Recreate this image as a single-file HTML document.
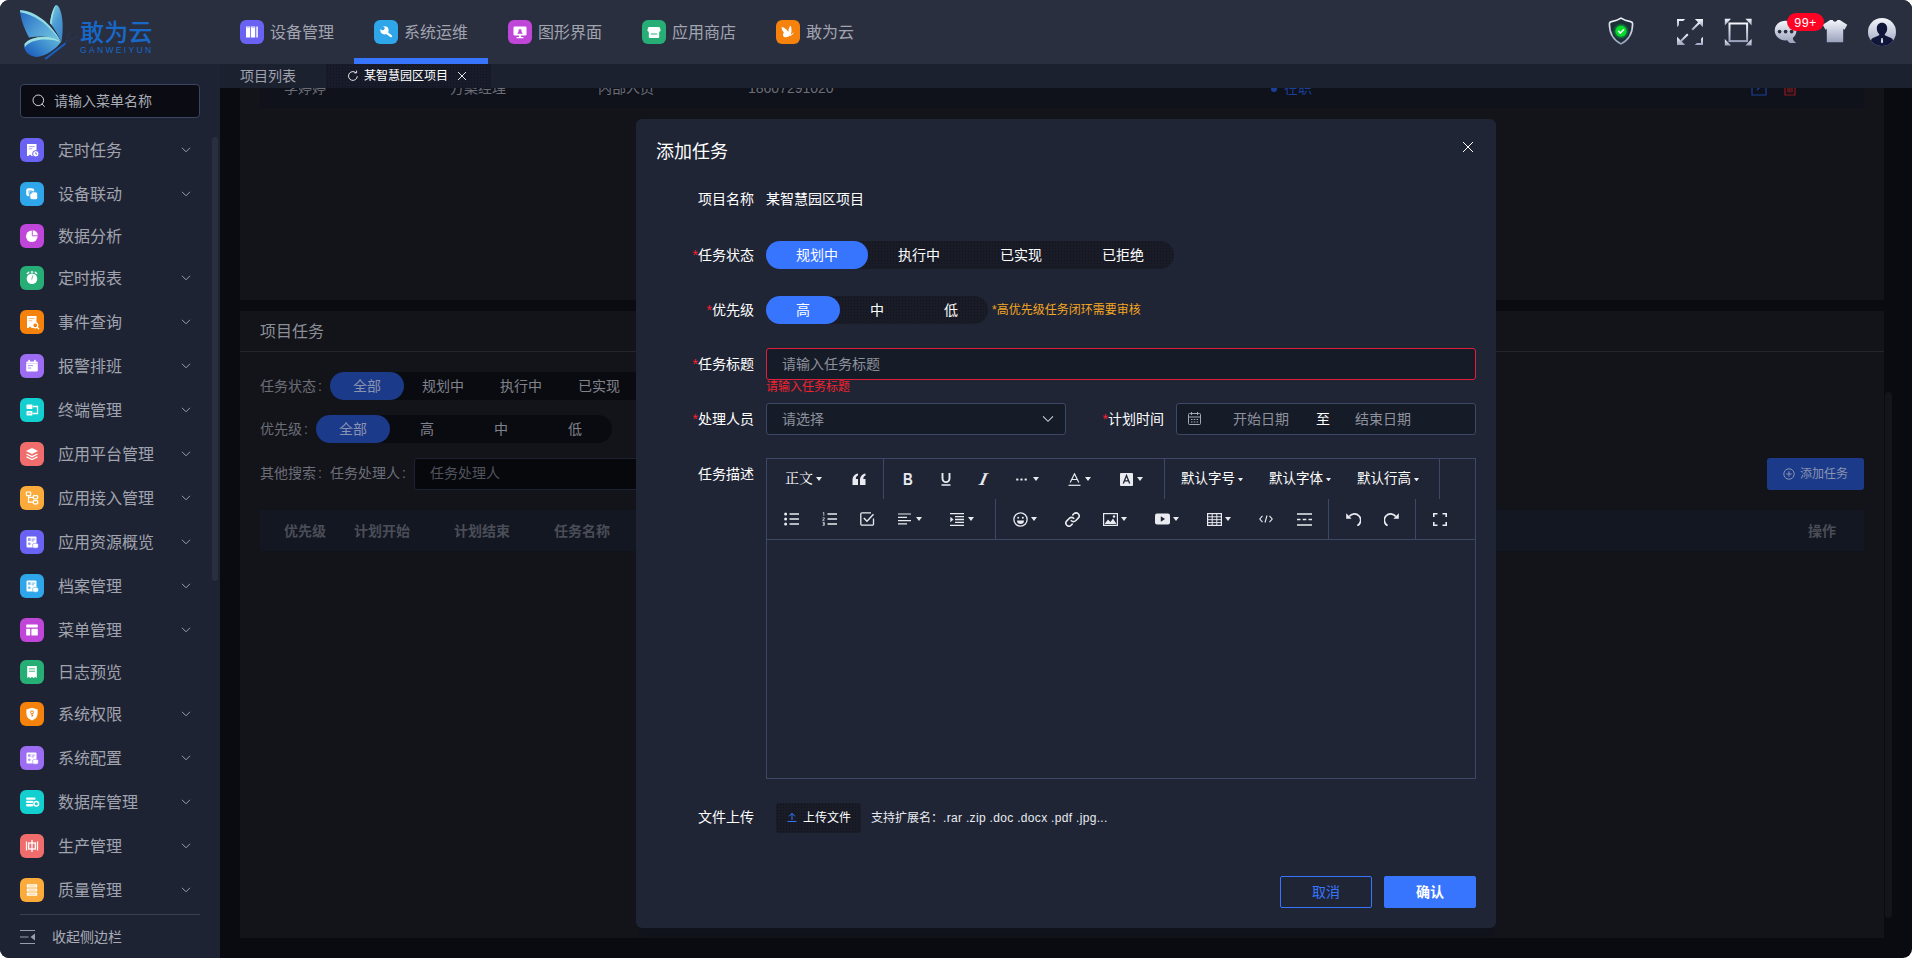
<!DOCTYPE html>
<html lang="zh-CN">
<head>
<meta charset="utf-8">
<title>敢为云 - 添加任务</title>
<style>
*{box-sizing:border-box;margin:0;padding:0}
html,body{width:1912px;height:958px;overflow:hidden;background:#fff}
body{font-family:"Liberation Sans","Noto Sans CJK SC",sans-serif;font-size:14px;color:#fff;position:relative}
.abs{position:absolute}
#app{position:absolute;left:0;top:0;width:1912px;height:958px;border-radius:9px;overflow:hidden;background:#0a0b11}
/* header */
#hdr{position:absolute;left:0;top:0;width:1912px;height:64px;background:#2a2f40}
.nav{position:absolute;top:21px;height:24px;white-space:nowrap}
.nav .ic{position:absolute;left:0;top:-1px;width:24px;height:24px;border-radius:6px}
.nav .ic svg{position:absolute;left:0;top:0}
.nav .tx{position:absolute;left:30px;top:0;line-height:24px;font-size:16px;color:#a1a4ae}
#navline{position:absolute;left:354px;top:58px;width:134px;height:6px;background:#3875ff}
/* sidebar */
#side{position:absolute;left:0;top:64px;width:220px;height:894px;background:#1e2334}
#search{position:absolute;left:20px;top:20px;width:180px;height:34px;border:1px solid #3a4560;border-radius:4px;background:#0b0c13}
#search .ph{position:absolute;left:33px;top:0;line-height:32px;font-size:14px;color:#a9acb6}
.mi{position:absolute;left:0;width:220px;height:24px}
.mi .ic{position:absolute;left:20px;top:0;width:24px;height:24px;border-radius:6px}
.mi .ic svg{position:absolute;left:0;top:0}
.mi .tx{position:absolute;left:58px;top:1px;line-height:24px;font-size:16px;color:#a1a4ae;white-space:nowrap}
.mi .ar{position:absolute;left:181px;top:8px}
/* tab bar */
#tabs{position:absolute;left:220px;top:64px;width:1692px;height:24px;background:#1c2130}
/* main */
.card{position:absolute;background:#13141a}
/* modal */
#modal{position:absolute;left:636px;top:119px;width:860px;height:809px;border-radius:6px;background:#1f2535;box-shadow:0 12px 3px -4px #10131c}
.lbl{position:absolute;left:0;width:118px;text-align:right;font-size:14px;line-height:20px;color:#fff;white-space:nowrap}
.lbl i{color:#ff1f2d;font-style:normal}
.pill{position:absolute;height:28px;border-radius:14px;background:#161923}
.pill span{position:absolute;top:0;height:28px;line-height:28px;text-align:center;font-size:14px;color:#fff}
.pill span.on{background:#3875ff;border-radius:14px}
.inp{position:absolute;height:32px;border:1px solid #3b4866;border-radius:3px;background:#161b28}
.ph{color:#8d919c;font-size:14px}

.dim{font-size:14px;line-height:20px;color:#6b6e77;white-space:nowrap}
.bpill{height:28px;line-height:28px;text-align:center;font-size:14px;color:#80838c;border-radius:14px;white-space:nowrap}
.bpill.on{background:#1c3a8a;color:#8a93b0}
.th{font-size:14px;line-height:18px;color:#4a4d57;font-weight:bold;white-space:nowrap}

.dots,.pill{background-color:#191c27;background-image:radial-gradient(#11131c 0.6px,transparent 0.8px);background-size:3px 3px}
.cl{margin-left:2px}
</style>
</head>
<body>
<div id="app">

<!-- MAIN BACKGROUND (dimmed by modal overlay) -->
<div id="main">
<!-- card 1 : member table bottom row (dimmed) -->
<div class="card" style="left:240px;top:88px;width:1644px;height:212px"></div>
<div class="abs" style="left:260px;top:88px;width:1604px;height:20px;background:#0f121b"></div>
<div class="abs dim" style="left:284px;top:78px">李婷婷</div>
<div class="abs dim" style="left:450px;top:78px">方案经理</div>
<div class="abs dim" style="left:598px;top:78px">内部人员</div>
<div class="abs dim" style="left:748px;top:78px">18607291020</div>
<div class="abs" style="left:1271px;top:86px;width:6px;height:6px;border-radius:3px;background:#1b3f99"></div><div class="abs dim" style="left:1284px;top:78px;color:#1b3f99">在职</div>
<svg class="abs" style="left:1751px;top:80px" width="16" height="16" viewBox="0 0 16 16"><path d="M1 1h8M15 7v8H1V1" stroke="#1b3f99" stroke-width="1.200" fill="none"/><path d="M6 10l8-8" stroke="#1b3f99" stroke-width="1.200"/></svg>
<svg class="abs" style="left:1782px;top:80px" width="16" height="16" viewBox="0 0 16 16"><path d="M1.500 3.500h13M3 3.500v11.500h10V3.500M6 6.500v6M8 6.500v6M10 6.500v6M5.500 3V1h5v2" stroke="#8f1820" stroke-width="1.200" fill="none"/></svg>

<!-- card 2 : project tasks -->
<div class="card" style="left:240px;top:311px;width:1644px;height:627px"></div>
<div class="abs" style="left:260px;top:321px;font-size:16px;line-height:22px;color:#8b8e97;white-space:nowrap">项目任务</div>
<div class="abs" style="left:240px;top:351px;width:1644px;height:1px;background:#23252d"></div>

<div class="abs dim" style="left:260px;top:376px">任务状态<span class="cl">:</span></div>
<div class="abs" style="left:330px;top:372px;width:400px;height:28px;border-radius:14px;background:#0a0b11"></div>
<div class="abs bpill on" style="left:330px;top:372px;width:74px">全部</div>
<div class="abs bpill" style="left:404px;top:372px;width:78px">规划中</div>
<div class="abs bpill" style="left:482px;top:372px;width:78px">执行中</div>
<div class="abs bpill" style="left:560px;top:372px;width:78px">已实现</div>

<div class="abs dim" style="left:260px;top:419px">优先级<span class="cl">:</span></div>
<div class="abs" style="left:316px;top:415px;width:296px;height:28px;border-radius:14px;background:#0a0b11"></div>
<div class="abs bpill on" style="left:316px;top:415px;width:74px">全部</div>
<div class="abs bpill" style="left:390px;top:415px;width:74px">高</div>
<div class="abs bpill" style="left:464px;top:415px;width:74px">中</div>
<div class="abs bpill" style="left:538px;top:415px;width:74px">低</div>

<div class="abs dim" style="left:260px;top:463px">其他搜索<span class="cl">:</span></div><div class="abs dim" style="left:330px;top:463px">任务处理人<span class="cl">:</span></div>
<div class="abs" style="left:414px;top:458px;width:300px;height:32px;border:1px solid #1c2233;border-radius:3px;background:#07080c"></div>
<div class="abs" style="left:430px;top:463px;font-size:14px;line-height:20px;color:#50535c;white-space:nowrap">任务处理人</div>

<div class="abs" style="left:1767px;top:458px;width:97px;height:32px;border-radius:3px;background:#1c3a8a"></div>
<svg class="abs" style="left:1783px;top:468px" width="12" height="12" viewBox="0 0 12 12"><circle cx="6" cy="6" r="5.200" fill="none" stroke="#8a93b0" stroke-width="1"/><path d="M6 3.300v5.400M3.300 6h5.400" stroke="#8a93b0" stroke-width="1"/></svg>
<div class="abs" style="left:1800px;top:464px;font-size:12px;line-height:20px;color:#8a93b0;white-space:nowrap">添加任务</div>

<div class="abs" style="left:260px;top:510px;width:1604px;height:41px;background:#131722"></div>
<div class="abs th" style="left:284px;top:522px">优先级</div>
<div class="abs th" style="left:354px;top:522px">计划开始</div>
<div class="abs th" style="left:454px;top:522px">计划结束</div>
<div class="abs th" style="left:554px;top:522px">任务名称</div>
<div class="abs th" style="left:1808px;top:522px">操作</div>

<!-- page scrollbar -->
<div class="abs" style="left:1885px;top:392px;width:7px;height:526px;border-radius:4px;background:#13151d"></div>
</div>

<!-- HEADER -->
<div id="hdr">
<!-- logo -->
<svg class="abs" style="left:18px;top:3px" width="64" height="60" viewBox="0 0 64 60">
 <defs>
  <linearGradient id="lg1" x1="0" y1="0.2" x2="1" y2="0.8"><stop offset="0" stop-color="#2a70c4"/><stop offset="0.5" stop-color="#4f9fd6"/><stop offset="1" stop-color="#72c4de"/></linearGradient>
  <linearGradient id="lg2" x1="0.2" y1="0" x2="0.8" y2="1"><stop offset="0" stop-color="#78cbdc"/><stop offset="0.5" stop-color="#4a9ad4"/><stop offset="1" stop-color="#3a86cc"/></linearGradient>
  <linearGradient id="lg3" x1="0" y1="0.8" x2="1" y2="0.2"><stop offset="0" stop-color="#1a5cbc"/><stop offset="0.55" stop-color="#3f8fd0"/><stop offset="1" stop-color="#62b4da"/></linearGradient>
 </defs>
 <path d="M2 7.300 C9 7 17 11 24 16 C31 21 38 30 43 38.500 C36 34 24 32 11 34.500 C7 27 2.500 17 2 7.300Z" fill="url(#lg1)"/>
 <path d="M2 7.300 C9 7 17 11 24 16 C31 21 38 30 43 38.500 C37 30.500 29 22 22 17.500 C15 13 8 10 2.100 9.300Z" fill="#92dbe0"/>
 <path d="M38 2 C41 2 44 9 44.600 20 C44.900 28 44.200 34 43.500 39 C40 32 36 25 32 20 C33 12 35 5 38 2Z" fill="url(#lg2)"/>
 <path d="M38 2 C36.500 6 34.500 13 33.600 21.800 L32 20 C33 12 35 5 38 2Z" fill="#9fe3e0"/>
 <path d="M6.500 41 C10 36 20 33 30 34 C36 34.500 41 37 43 39 C38 46 28 53 19 54 C11 53.500 5 48 6.500 41Z" fill="url(#lg3)"/>
 <path d="M6.500 41 C10 36 20 33 30 34 C36 34.500 41 37 43 39 C36 36.800 28 36 21 37 C14 38 9 40.500 6.800 44.500Z" fill="#9be0e0"/>
 <path d="M26.500 55.300 L46.800 39.800 L48 41.300 L27.800 56.800Z" fill="#1a5fc2"/>
 <path d="M47.500 40 L52 28 M47.500 40 L60 33" stroke="#1c4f9c" stroke-width="0.500" fill="none" stroke-dasharray="1.200 1"/>
</svg>
<div class="abs" style="left:80px;top:18px;font-size:24px;line-height:30px;color:#1868c8;font-weight:500;letter-spacing:0.2px;white-space:nowrap">敢为云</div>
<div class="abs" style="left:80px;top:45px;font-size:8.500px;line-height:10px;color:#1868c8;letter-spacing:2.350px;white-space:nowrap;transform-origin:0 0">GANWEIYUN</div>

<!-- nav -->
<div class="nav" style="left:240px"><div class="ic" style="background:#6a62f2"><svg width="24" height="24" viewBox="0 0 24 24"><rect x="6" y="6.500" width="4.200" height="11" fill="#fff"/><rect x="11" y="6.500" width="4.200" height="11" fill="#fff"/><rect x="16.300" y="6.500" width="1.500" height="11" fill="#fff"/><rect x="6.800" y="7.200" width="2.600" height="0.800" fill="#6a62f2" opacity=".5"/><rect x="11.800" y="7.200" width="2.600" height="0.800" fill="#6a62f2" opacity=".5"/></svg></div><div class="tx">设备管理</div></div>
<div class="nav" style="left:374px"><div class="ic" style="background:#2ea6e9"><svg width="24" height="24" viewBox="0 0 24 24"><circle cx="10.500" cy="10.300" r="4.100" fill="#fff"/><circle cx="8.600" cy="8.300" r="2" fill="#2ea6e9"/><path d="M8.600 8.300L4.500 8.500 8 4.500z" fill="#2ea6e9"/><path d="M13.200 13.300L17 16.100" stroke="#fff" stroke-width="2.400" stroke-linecap="round"/></svg></div><div class="tx">系统运维</div></div>
<div class="nav" style="left:508px"><div class="ic" style="background:#c046d9"><svg width="24" height="24" viewBox="0 0 24 24"><rect x="5.500" y="6.500" width="13" height="9" rx="1.200" fill="#fff"/><rect x="11" y="15" width="2" height="2.500" fill="#fff"/><rect x="8.500" y="17" width="7" height="1.300" rx=".6" fill="#fff"/><path d="M9.800 13.500l2.200-4.500 2.200 4.500z M10 10.200h4" fill="#c046d9" stroke="#c046d9" stroke-width=".6"/></svg></div><div class="tx">图形界面</div></div>
<div class="nav" style="left:642px"><div class="ic" style="background:#27ae76"><svg width="24" height="24" viewBox="0 0 24 24"><path d="M6.500 7h11l1.200 3.200a1.800 1.800 0 0 1-1.500 1.500V17a1 1 0 0 1-1 1H7.800a1 1 0 0 1-1-1v-5.300a1.800 1.800 0 0 1-1.500-1.500z" fill="#fff"/><rect x="8.800" y="13.300" width="6.400" height="1.400" fill="#27ae76" opacity=".7"/></svg></div><div class="tx">应用商店</div></div>
<div class="nav" style="left:776px"><div class="ic" style="background:#f5820d"><svg width="24" height="24" viewBox="0 0 24 24"><path d="M5.500 7c3 .2 5.500 2.500 6.800 5 .2-2.800 1-5.500 2.400-6.200 1 1.800 1.200 5.500.2 8.500-1.600 2.600-5 3.800-7 2.500-1.500-1-1-3 0-4.200C6.500 11 5.500 9 5.500 7z" fill="#fff"/><path d="M14 16l3.500-3" stroke="#fff" stroke-width="1"/></svg></div><div class="tx">敢为云</div></div>
<div id="navline"></div>
<!-- right icons -->
<svg class="abs" style="left:1607px;top:16px" width="28" height="30" viewBox="0 0 28 30">
 <defs><linearGradient id="gI" x1="0" y1="0" x2="0" y2="1"><stop offset="0" stop-color="#f4f6fb"/><stop offset="1" stop-color="#9aa3bd"/></linearGradient>
 <radialGradient id="gG" cx="0.5" cy="0.5" r="0.5"><stop offset="0" stop-color="#06e02c"/><stop offset="0.62" stop-color="#06dc2a"/><stop offset="0.72" stop-color="#0e8a3c" stop-opacity="0.9"/><stop offset="1" stop-color="#0f6a3a" stop-opacity="0.15"/></radialGradient></defs>
 <path d="M14 2.200 C16.500 3.900 20 5 23.500 5.600 Q25.600 6 25.600 8 C25.600 16 22.500 23.500 14 27.900 C5.500 23.500 2.400 16 2.400 8 Q2.400 6 4.500 5.600 C8 5 11.500 3.900 14 2.200Z" fill="#1d3038" stroke="url(#gI)" stroke-width="1.600"/>
 <circle cx="14" cy="15.200" r="8" fill="url(#gG)"/>
 <path d="M11.600 15.300l1.800 1.800 3.200-3.400" stroke="#fff" stroke-width="1.500" fill="none" stroke-linecap="round" stroke-linejoin="round"/>
</svg>
<svg class="abs" style="left:1676px;top:18px" width="28" height="28" viewBox="0 0 28 28">
 <g fill="url(#gI)">
  <path d="M1 1h8.200l-2 2H3v4.200l-2 2z"/>
  <path d="M27 27h-8.200l2-2H25v-4.200l2-2z"/>
  <path d="M18.800 1H27v8.200z"/>
  <path d="M1 18.800V27h8.200z"/>
 </g>
 <g stroke="url(#gI)" stroke-width="2" fill="none"><path d="M23.500 4.500l-7.300 7.300"/><path d="M4.500 23.500l7.300-7.300"/></g>
</svg>
<svg class="abs" style="left:1724px;top:18px" width="28" height="28" viewBox="0 0 28 28">
 <rect x="5.500" y="5.500" width="17.600" height="17.600" fill="none" stroke="url(#gI)" stroke-width="2"/>
 <g fill="url(#gI)">
  <path d="M0.800 0.800h6.200L0.800 7.500z"/><path d="M27.600 0.800v6.700L21.400 0.800z"/><path d="M27.600 27.600h-6.200l6.200-6.700z"/><path d="M0.800 27.600v-6.700l6.200 6.700z"/>
 </g>
</svg>
<svg class="abs" style="left:1774px;top:20px" width="25" height="25" viewBox="0 0 25 25">
 <path d="M11.500 0.800c6.200 0 11 4.300 11 9.800 0 3.300-1.600 5.900-3.700 7.500 0.200 1.900 1.400 3.700 3.600 4.900h-6.600c-1.300-0.900-2.200-1.800-2.600-2.700-0.600 0.100-1.100 0.100-1.700 0.100-6.200 0-10.800-4.300-10.800-9.800S5.300 0.800 11.500 0.800z" fill="url(#gI)"/>
 <circle cx="5.600" cy="11.600" r="1.850" fill="#2a2f40"/><circle cx="11.600" cy="11.600" r="1.850" fill="#2a2f40"/><circle cx="17.600" cy="11.600" r="1.850" fill="#2a2f40"/>
</svg>
<svg class="abs" style="left:1821px;top:18px" width="28" height="26" viewBox="0 0 28 26">
 <path d="M9.200 2h2.500c0.500 1.100 1.300 1.700 2.300 1.700s1.800-0.600 2.300-1.700h2.500l7.500 4.800-2.800 4.900-1.300-0.700V24.200H5.800V11l-1.300 0.700L1.700 6.800z" fill="url(#gI)"/>
</svg>
<div class="abs" style="left:1787px;top:13px;width:37px;height:18px;border-radius:9px;background:#ff0325;color:#fff;font-size:12.500px;line-height:20px;letter-spacing:0.4px;text-align:center">99+</div>
<svg class="abs" style="left:1867px;top:17px" width="30" height="30" viewBox="0 0 30 30">
 <defs><clipPath id="cpA"><circle cx="15" cy="15" r="14"/></clipPath></defs>
 <circle cx="15" cy="15" r="14" fill="url(#gI)"/>
 <g clip-path="url(#cpA)">
  <path d="M15 5.800c3.200 0 5.200 2.300 5.200 5.600 0 2.400-1 4.400-2.400 5.500v1.400l6.300 2.600c1.600 0.800 2.300 2.500 2.300 5V30H3.600v-4.100c0-2.500 0.700-4.200 2.300-5l6.300-2.600v-1.400c-1.400-1.100-2.400-3.100-2.400-5.500 0-3.300 2-5.600 5.200-5.600z" fill="#10163a"/>
  <path d="M14.400 21h1.200l0.500 4-1.100 1.600-1.100-1.600z" fill="#dfe3ee"/>
 </g>
</svg>

</div>

<!-- TAB BAR -->
<div id="tabs">
<div class="abs" style="left:20px;top:2px;font-size:14px;line-height:20px;color:#a0a3ad;white-space:nowrap">项目列表</div>
<div class="abs" style="left:106px;top:0;width:165px;height:24px;background-color:#181b29;background-image:radial-gradient(#10131d 0.6px,transparent 0.8px);background-size:3px 3px"></div>
<svg class="abs" style="left:127px;top:6px" width="12" height="12" viewBox="0 0 12 12"><path d="M10.300 6.200a4.400 4.400 0 1 1-1.500-3.500" stroke="#e6e8ee" stroke-width="1" fill="none"/><path d="M7.300 2.900h2.300V0.600" stroke="#e6e8ee" stroke-width="1" fill="none"/></svg>
<div class="abs" style="left:144px;top:3px;font-size:12px;line-height:18px;color:#fff;white-space:nowrap">某智慧园区项目</div>
<svg class="abs" style="left:237px;top:7px" width="10" height="10" viewBox="0 0 10 10"><path d="M1 1l8 8M9 1l-8 8" stroke="#e6e8ee" stroke-width="1"/></svg>
</div>

<!-- SIDEBAR -->
<div id="side">
<div id="search"><svg class="abs" style="left:10px;top:8px" width="16" height="16" viewBox="0 0 16 16"><circle cx="7.300" cy="7.300" r="5.300" fill="none" stroke="#d6d8de" stroke-width="1"/><path d="M11.100 11.200l2.300 2.300" stroke="#d6d8de" stroke-width="1" stroke-linecap="round"/></svg><div class="ph">请输入菜单名称</div></div>

<div class="mi" style="top:74px"><div class="ic" style="background:#6a62f2"><svg width="24" height="24" viewBox="0 0 24 24"><path d="M7 6h9.500v7.500h-3v4.500h-1.800l-1.700-1.500-1.600 1.500H7z" fill="#fff"/><rect x="8.800" y="8" width="5.800" height="1.100" fill="#6a62f2" opacity=".55"/><rect x="8.800" y="10.200" width="3.500" height="1.100" fill="#6a62f2" opacity=".55"/><circle cx="15.800" cy="15.800" r="3.200" fill="#fff" stroke="#6a62f2" stroke-width="1"/><path d="M15.800 14.300v1.700h1.300" stroke="#6a62f2" stroke-width=".9" fill="none"/></svg></div><div class="tx">定时任务</div><svg class="ar" width="10" height="8" viewBox="0 0 10 8"><path d="M1 1.800l4 4 4-4" stroke="#9a9eab" stroke-width="1" fill="none"/></svg></div>
<div class="mi" style="top:118px"><div class="ic" style="background:#2ea6e9"><svg width="24" height="24" viewBox="0 0 24 24"><rect x="6.200" y="6.200" width="8" height="8" rx="2.200" fill="#fff"/><rect x="9.800" y="9.800" width="8" height="8" rx="2.200" fill="#fff" stroke="#2ea6e9" stroke-width="1"/><rect x="8.300" y="8.300" width="3.800" height="3.800" rx="1" fill="#2ea6e9" opacity=".55"/></svg></div><div class="tx">设备联动</div><svg class="ar" width="10" height="8" viewBox="0 0 10 8"><path d="M1 1.800l4 4 4-4" stroke="#9a9eab" stroke-width="1" fill="none"/></svg></div>
<div class="mi" style="top:160px"><div class="ic" style="background:#c046d9"><svg width="24" height="24" viewBox="0 0 24 24"><circle cx="11.800" cy="12.300" r="5.800" fill="#fff"/><path d="M12.300 5.800a6 6 0 0 1 6 6h-6z" fill="#fff" stroke="#c046d9" stroke-width=".9"/></svg></div><div class="tx">数据分析</div></div>
<div class="mi" style="top:202px"><div class="ic" style="background:#27ae76"><svg width="24" height="24" viewBox="0 0 24 24"><circle cx="12" cy="12.800" r="5.300" fill="#fff"/><rect x="10.800" y="5.300" width="2.400" height="1.500" rx=".5" fill="#fff"/><path d="M7.300 7.600l1.500-1.300M16.700 7.600l-1.500-1.300" stroke="#fff" stroke-width="1.400" stroke-linecap="round"/><path d="M12.800 9.800l-1 3.400" stroke="#27ae76" stroke-width="1" stroke-linecap="round" opacity=".7"/></svg></div><div class="tx">定时报表</div><svg class="ar" width="10" height="8" viewBox="0 0 10 8"><path d="M1 1.800l4 4 4-4" stroke="#9a9eab" stroke-width="1" fill="none"/></svg></div>
<div class="mi" style="top:246px"><div class="ic" style="background:#f5820d"><svg width="24" height="24" viewBox="0 0 24 24"><path d="M7 6h9.500v7.500h-3v4.500h-1.800l-1.700-1.500-1.600 1.500H7z" fill="#fff"/><rect x="8.800" y="8" width="5.800" height="1.100" fill="#f5820d" opacity=".55"/><rect x="8.800" y="10.200" width="3.500" height="1.100" fill="#f5820d" opacity=".55"/><circle cx="15.300" cy="15.300" r="2.500" fill="#f5820d" stroke="#fff" stroke-width="1.200"/><path d="M17.200 17.200l1.500 1.500" stroke="#fff" stroke-width="1.300" stroke-linecap="round"/></svg></div><div class="tx">事件查询</div><svg class="ar" width="10" height="8" viewBox="0 0 10 8"><path d="M1 1.800l4 4 4-4" stroke="#9a9eab" stroke-width="1" fill="none"/></svg></div>
<div class="mi" style="top:290px"><div class="ic" style="background:#9c6df2"><svg width="24" height="24" viewBox="0 0 24 24"><rect x="6.200" y="7.500" width="11.600" height="10" rx="1.200" fill="#fff"/><rect x="8.300" y="5.800" width="1.600" height="3" rx=".6" fill="#fff"/><rect x="14.100" y="5.800" width="1.600" height="3" rx=".6" fill="#fff"/><rect x="8" y="11" width="5" height="1.100" fill="#9c6df2" opacity=".7"/><rect x="8" y="13.500" width="3.200" height="1.100" fill="#9c6df2" opacity=".7"/><rect x="6.200" y="9" width="11.600" height=".8" fill="#9c6df2" opacity=".35"/></svg></div><div class="tx">报警排班</div><svg class="ar" width="10" height="8" viewBox="0 0 10 8"><path d="M1 1.800l4 4 4-4" stroke="#9a9eab" stroke-width="1" fill="none"/></svg></div>
<div class="mi" style="top:334px"><div class="ic" style="background:#14cfcf"><svg width="24" height="24" viewBox="0 0 24 24"><rect x="6.500" y="6.500" width="6" height="4.500" rx=".8" fill="#fff"/><rect x="6.500" y="13" width="6" height="4.500" rx=".8" fill="#fff"/><path d="M13 8.500h4.500v7H13" stroke="#fff" stroke-width="1.300" fill="none"/><rect x="8" y="14.600" width="3" height="1" fill="#14cfcf" opacity=".7"/></svg></div><div class="tx">终端管理</div><svg class="ar" width="10" height="8" viewBox="0 0 10 8"><path d="M1 1.800l4 4 4-4" stroke="#9a9eab" stroke-width="1" fill="none"/></svg></div>
<div class="mi" style="top:378px"><div class="ic" style="background:#f16d6d"><svg width="24" height="24" viewBox="0 0 24 24"><path d="M12 6l6 3-6 3-6-3z" fill="#fff"/><path d="M6.500 12l5.500 2.700 5.500-2.700" stroke="#fff" stroke-width="1.300" fill="none" stroke-linejoin="round"/><path d="M6.500 14.800l5.500 2.700 5.500-2.700" stroke="#fff" stroke-width="1.300" fill="none" stroke-linejoin="round"/></svg></div><div class="tx">应用平台管理</div><svg class="ar" width="10" height="8" viewBox="0 0 10 8"><path d="M1 1.800l4 4 4-4" stroke="#9a9eab" stroke-width="1" fill="none"/></svg></div>
<div class="mi" style="top:422px"><div class="ic" style="background:#fbab3c"><svg width="24" height="24" viewBox="0 0 24 24"><rect x="6.300" y="6" width="4.400" height="3.600" rx=".8" fill="none" stroke="#fff" stroke-width="1.200"/><rect x="13.300" y="9.700" width="4.400" height="3.200" rx=".8" fill="none" stroke="#fff" stroke-width="1.200"/><rect x="13.300" y="14.600" width="4.400" height="3.200" rx=".8" fill="none" stroke="#fff" stroke-width="1.200"/><path d="M8.500 9.600v6.600h4.800M8.500 11.300h4.800" stroke="#fff" stroke-width="1.200" fill="none"/></svg></div><div class="tx">应用接入管理</div><svg class="ar" width="10" height="8" viewBox="0 0 10 8"><path d="M1 1.800l4 4 4-4" stroke="#9a9eab" stroke-width="1" fill="none"/></svg></div>
<div class="mi" style="top:466px"><div class="ic" style="background:#6a62f2"><svg width="24" height="24" viewBox="0 0 24 24"><rect x="6.500" y="6.500" width="10" height="11" rx="1" fill="#fff"/><rect x="8" y="8.200" width="2.600" height="2.600" fill="#6a62f2" opacity=".7"/><rect x="11.600" y="8.600" width="3.600" height="1" fill="#6a62f2" opacity=".7"/><rect x="11.600" y="10.300" width="2.400" height="1" fill="#6a62f2" opacity=".7"/><circle cx="9.300" cy="13.800" r="1.300" fill="#6a62f2" opacity=".7"/><ellipse cx="15.500" cy="14.500" rx="2.800" ry="1.200" fill="#fff" stroke="#6a62f2" stroke-width=".5"/><path d="M12.700 14.500v2.500a2.800 1.200 0 0 0 5.600 0v-2.500" fill="#fff" stroke="#6a62f2" stroke-width=".5"/></svg></div><div class="tx">应用资源概览</div><svg class="ar" width="10" height="8" viewBox="0 0 10 8"><path d="M1 1.800l4 4 4-4" stroke="#9a9eab" stroke-width="1" fill="none"/></svg></div>
<div class="mi" style="top:510px"><div class="ic" style="background:#2ea6e9"><svg width="24" height="24" viewBox="0 0 24 24"><rect x="6.500" y="6.500" width="10" height="11" rx="1" fill="#fff"/><rect x="8" y="8.200" width="2.600" height="2.600" fill="#2ea6e9" opacity=".7"/><rect x="11.600" y="8.600" width="3.600" height="1" fill="#2ea6e9" opacity=".7"/><rect x="11.600" y="10.300" width="2.400" height="1" fill="#2ea6e9" opacity=".7"/><circle cx="9.300" cy="13.800" r="1.300" fill="#2ea6e9" opacity=".7"/><ellipse cx="15.500" cy="14.500" rx="2.800" ry="1.200" fill="#fff" stroke="#2ea6e9" stroke-width=".5"/><path d="M12.700 14.500v2.500a2.800 1.200 0 0 0 5.600 0v-2.500" fill="#fff" stroke="#2ea6e9" stroke-width=".5"/></svg></div><div class="tx">档案管理</div><svg class="ar" width="10" height="8" viewBox="0 0 10 8"><path d="M1 1.800l4 4 4-4" stroke="#9a9eab" stroke-width="1" fill="none"/></svg></div>
<div class="mi" style="top:554px"><div class="ic" style="background:#c046d9"><svg width="24" height="24" viewBox="0 0 24 24"><rect x="6.200" y="6.500" width="11.600" height="3" rx=".6" fill="#fff"/><rect x="6.200" y="10.800" width="4" height="6.700" rx=".6" fill="#fff"/><rect x="11.400" y="10.800" width="6.400" height="6.700" rx=".6" fill="#fff"/></svg></div><div class="tx">菜单管理</div><svg class="ar" width="10" height="8" viewBox="0 0 10 8"><path d="M1 1.800l4 4 4-4" stroke="#9a9eab" stroke-width="1" fill="none"/></svg></div>
<div class="mi" style="top:596px"><div class="ic" style="background:#27ae76"><svg width="24" height="24" viewBox="0 0 24 24"><path d="M7.200 6h9.600v12l-1.600-1-1.600 1-1.600-1-1.600 1-1.600-1-1.600 1z" fill="#fff"/><rect x="9" y="8.200" width="6" height="1.200" fill="#27ae76" opacity=".7"/><rect x="9" y="10.700" width="6" height="1.200" fill="#27ae76" opacity=".7"/></svg></div><div class="tx">日志预览</div></div>
<div class="mi" style="top:638px"><div class="ic" style="background:#f5820d"><svg width="24" height="24" viewBox="0 0 24 24"><path d="M12 5.800l5.600 1.700v4.500c0 3-2.300 5.300-5.600 6.400-3.300-1.100-5.600-3.400-5.600-6.400V7.500z" fill="#fff"/><circle cx="12" cy="10.300" r="1.500" fill="none" stroke="#f5820d" stroke-width="1"/><path d="M12 11.800v3M12 13.500h1.200" stroke="#f5820d" stroke-width="1" fill="none"/></svg></div><div class="tx">系统权限</div><svg class="ar" width="10" height="8" viewBox="0 0 10 8"><path d="M1 1.800l4 4 4-4" stroke="#9a9eab" stroke-width="1" fill="none"/></svg></div>
<div class="mi" style="top:682px"><div class="ic" style="background:#9c6df2"><svg width="24" height="24" viewBox="0 0 24 24"><rect x="6.500" y="6.500" width="10" height="11" rx="1" fill="#fff"/><rect x="8" y="8.200" width="2.600" height="2.600" fill="#9c6df2" opacity=".7"/><rect x="11.600" y="8.600" width="3.600" height="1" fill="#9c6df2" opacity=".7"/><rect x="11.600" y="10.300" width="2.400" height="1" fill="#9c6df2" opacity=".7"/><circle cx="9.300" cy="13.800" r="1.300" fill="#9c6df2" opacity=".7"/><ellipse cx="15.500" cy="14.500" rx="2.800" ry="1.200" fill="#fff" stroke="#9c6df2" stroke-width=".5"/><path d="M12.700 14.500v2.500a2.800 1.200 0 0 0 5.600 0v-2.500" fill="#fff" stroke="#9c6df2" stroke-width=".5"/></svg></div><div class="tx">系统配置</div><svg class="ar" width="10" height="8" viewBox="0 0 10 8"><path d="M1 1.800l4 4 4-4" stroke="#9a9eab" stroke-width="1" fill="none"/></svg></div>
<div class="mi" style="top:726px"><div class="ic" style="background:#14cfcf"><svg width="24" height="24" viewBox="0 0 24 24"><rect x="6" y="7.500" width="9.500" height="2.300" rx="1.100" fill="#fff"/><rect x="6" y="10.800" width="7.500" height="2.300" rx="1.100" fill="#fff"/><rect x="6" y="14.100" width="7.500" height="2.300" rx="1.100" fill="#fff"/><circle cx="16.300" cy="13.800" r="2.300" fill="none" stroke="#fff" stroke-width="1.500"/></svg></div><div class="tx">数据库管理</div><svg class="ar" width="10" height="8" viewBox="0 0 10 8"><path d="M1 1.800l4 4 4-4" stroke="#9a9eab" stroke-width="1" fill="none"/></svg></div>
<div class="mi" style="top:770px"><div class="ic" style="background:#f16d6d"><svg width="24" height="24" viewBox="0 0 24 24"><path d="M6.500 7.500v9M17.500 7.500v9" stroke="#fff" stroke-width="1.300"/><rect x="8.700" y="9" width="6.600" height="6" fill="none" stroke="#fff" stroke-width="1.300"/><path d="M12 6v12" stroke="#fff" stroke-width="1.300"/></svg></div><div class="tx">生产管理</div><svg class="ar" width="10" height="8" viewBox="0 0 10 8"><path d="M1 1.800l4 4 4-4" stroke="#9a9eab" stroke-width="1" fill="none"/></svg></div>
<div class="mi" style="top:814px"><div class="ic" style="background:#fbab3c"><svg width="24" height="24" viewBox="0 0 24 24"><rect x="6.800" y="6.300" width="10.400" height="3.200" rx=".6" fill="#fff"/><rect x="6.800" y="10.400" width="10.400" height="3.200" rx=".6" fill="#fff"/><rect x="6.800" y="14.500" width="10.400" height="3.200" rx=".6" fill="#fff"/><rect x="8.500" y="7.500" width="7" height=".9" fill="#fbab3c" opacity=".7"/><rect x="8.500" y="11.600" width="7" height=".9" fill="#fbab3c" opacity=".7"/><rect x="8.500" y="15.700" width="7" height=".9" fill="#fbab3c" opacity=".7"/></svg></div><div class="tx">质量管理</div><svg class="ar" width="10" height="8" viewBox="0 0 10 8"><path d="M1 1.800l4 4 4-4" stroke="#9a9eab" stroke-width="1" fill="none"/></svg></div>

<div class="abs" style="left:212px;top:73px;width:6px;height:444px;border-radius:3px;background:#2a2f40"></div>
<div class="abs" style="left:20px;top:850px;width:180px;height:1px;background:#3a3f52"></div>
<svg class="abs" style="left:20px;top:865px" width="16" height="16" viewBox="0 0 16 16"><path d="M0 1.500h15M0 8h8.500M0 14.500h15" stroke="#9a9eab" stroke-width="1"/><path d="M15 4.500v7l-4.500-3.500z" fill="#9a9eab"/></svg>
<div class="abs" style="left:52px;top:863px;font-size:14px;line-height:20px;color:#a9acb6;white-space:nowrap">收起侧边栏</div>
</div>

<!-- MODAL -->
<div id="modal"><div class="abs" style="left:20px;top:21px;font-size:18px;line-height:24px;color:#fff;white-space:nowrap">添加任务</div>
<svg class="abs" style="left:826px;top:22px" width="12" height="12" viewBox="0 0 12 12"><path d="M1 1l10 10M11 1L1 11" stroke="#fff" stroke-width="1"/></svg>
<div class="lbl" style="top:70px">项目名称</div>
<div class="abs" style="left:130px;top:70px;font-size:14px;line-height:20px;white-space:nowrap">某智慧园区项目</div>
<div class="lbl" style="top:126px"><i>*</i>任务状态</div>
<div class="pill" style="left:130px;top:122px;width:408px"><span class="on" style="left:0;width:102px">规划中</span><span style="left:102px;width:102px">执行中</span><span style="left:204px;width:102px">已实现</span><span style="left:306px;width:102px">已拒绝</span></div>
<div class="lbl" style="top:181px"><i>*</i>优先级</div>
<div class="pill" style="left:130px;top:177px;width:222px"><span class="on" style="left:0;width:74px">高</span><span style="left:74px;width:74px">中</span><span style="left:148px;width:74px">低</span></div>
<div class="abs" style="left:356px;top:182px;font-size:12px;line-height:18px;color:#f5a623;white-space:nowrap">*高优先级任务闭环需要审核</div>
<div class="lbl" style="top:235px"><i>*</i>任务标题</div>
<div class="inp" style="left:130px;top:229px;width:710px;border-color:#e0203a"><div class="abs ph" style="left:15px;top:5px;line-height:20px">请输入任务标题</div></div>
<div class="abs" style="left:130px;top:259px;font-size:12px;line-height:18px;color:#f5222d;white-space:nowrap">请输入任务标题</div>
<div class="lbl" style="top:290px"><i>*</i>处理人员</div>
<div class="inp" style="left:130px;top:284px;width:300px"><div class="abs ph" style="left:15px;top:5px;line-height:20px">请选择</div><svg class="abs" style="left:275px;top:11px" width="12" height="8" viewBox="0 0 12 8"><path d="M1 1.300l5 5 5-5" stroke="#c9ccd6" stroke-width="1.100" fill="none"/></svg></div>
<div class="lbl" style="left:410px;top:290px"><i>*</i>计划时间</div>
<div class="inp" style="left:540px;top:284px;width:300px"><svg class="abs" style="left:10px;top:7px" width="15" height="15" viewBox="0 0 15 15"><rect x="1.500" y="2.500" width="12" height="11" rx="1" fill="none" stroke="#a4a8b4" stroke-width="1"/><path d="M1.500 6h12M4.500 1v3M10.500 1v3M4 8.500h1.500M6.800 8.500h1.500M9.600 8.500h1.500M4 11h1.500M6.800 11h1.500M9.600 11h1.500" stroke="#a4a8b4" stroke-width="1"/></svg><div class="abs ph" style="left:56px;top:5px;line-height:20px">开始日期</div><div class="abs" style="left:139px;top:5px;line-height:20px;font-size:14px;color:#fff">至</div><div class="abs ph" style="left:178px;top:5px;line-height:20px">结束日期</div></div>
<div class="lbl" style="top:345px">任务描述</div>
<div class="abs" style="left:130px;top:339px;width:710px;height:321px;border:1px solid #3b4866"></div>
<div class="abs" style="left:131px;top:420px;width:708px;height:1px;background:#3b4866"></div>
<div class="abs" style="left:247px;top:340px;width:1px;height:40px;background:#3b4866"></div>
<div class="abs" style="left:528px;top:340px;width:1px;height:40px;background:#3b4866"></div>
<div class="abs" style="left:803px;top:340px;width:1px;height:40px;background:#3b4866"></div>
<div class="abs" style="left:359px;top:380px;width:1px;height:40px;background:#3b4866"></div>
<div class="abs" style="left:692px;top:380px;width:1px;height:40px;background:#3b4866"></div>
<div class="abs" style="left:779px;top:380px;width:1px;height:40px;background:#3b4866"></div>
<div class="abs" style="left:149px;top:350px;font-family:'Liberation Serif','Noto Serif CJK SC',serif;font-size:14px;line-height:20px;color:#fff;white-space:nowrap">正文</div><svg class="abs" style="left:180px;top:358px" width="6" height="4" viewBox="0 0 6 4"><path d="M0 0h6L3 4z" fill="#e9ebf0"/></svg>
<svg class="abs" style="left:216px;top:354px" width="14" height="12" viewBox="0 0 14 12"><path d="M0.500 12V7.500C0.500 3.500 2.500 1 6 0.500v2C4.500 3 3.800 4.200 3.800 6H6v6z M8 12V7.500C8 3.500 10 1 13.500 0.500v2C12 3 11.300 4.200 11.300 6h2.200v6z" fill="#e9ebf0"/></svg>
<div class="abs" style="left:266px;top:349px;font-size:17px;line-height:22px;font-weight:bold;color:#e9ebf0;transform:scaleX(0.8);transform-origin:0 50%;margin:1px 0 0 1px">B</div>
<svg class="abs" style="left:304.6px;top:353.5px" width="10" height="13" viewBox="0 0 10 13"><path d="M1.500 0v5.600a3.500 3.500 0 0 0 7 0V0" stroke="#e9ebf0" stroke-width="1.900" fill="none"/><path d="M0.500 12h9" stroke="#e9ebf0" stroke-width="1.500"/></svg>
<div class="abs" style="left:342px;top:349px;font-family:'Liberation Serif',serif;font-size:18px;line-height:22px;font-weight:bold;font-style:italic;color:#e9ebf0;margin:0 0 0 2px;transform:skewX(-14deg)">I</div>
<svg class="abs" style="left:380px;top:358.5px" width="11" height="3" viewBox="0 0 11 3"><rect x="0.200" y="0.400" width="2.200" height="2.200" rx="0.500" fill="#e9ebf0"/><rect x="4.400" y="0.400" width="2.200" height="2.200" rx="0.500" fill="#e9ebf0"/><rect x="8.600" y="0.400" width="2.200" height="2.200" rx="0.500" fill="#e9ebf0"/></svg><svg class="abs" style="left:397px;top:358px" width="6" height="4" viewBox="0 0 6 4"><path d="M0 0h6L3 4z" fill="#e9ebf0"/></svg>
<svg class="abs" style="left:431.5px;top:353.5px" width="13" height="13" viewBox="0 0 13 13"><path d="M2.200 9.500L6.500 0.800 10.800 9.500M3.800 6.500h5.400" stroke="#e9ebf0" stroke-width="1.200" fill="none"/><path d="M0.500 12.300h12" stroke="#e9ebf0" stroke-width="1.200"/></svg><svg class="abs" style="left:449px;top:358px" width="6" height="4" viewBox="0 0 6 4"><path d="M0 0h6L3 4z" fill="#e9ebf0"/></svg>
<svg class="abs" style="left:483.5px;top:353.5px" width="13" height="13" viewBox="0 0 13 13"><rect x="0" y="0" width="13" height="13" rx="1" fill="#e9ebf0"/><path d="M3.300 10.500L6.500 2.500 9.700 10.500M4.600 7.800h3.800" stroke="#1f2535" stroke-width="1.300" fill="none"/></svg><svg class="abs" style="left:501px;top:358px" width="6" height="4" viewBox="0 0 6 4"><path d="M0 0h6L3 4z" fill="#e9ebf0"/></svg>
<div class="abs" style="left:545px;top:349px;font-size:13.500px;line-height:20px;color:#fff;white-space:nowrap;margin-top:1px">默认字号</div>
<div class="abs" style="left:633px;top:349px;font-size:13.500px;line-height:20px;color:#fff;white-space:nowrap;margin-top:1px">默认字体</div>
<div class="abs" style="left:721px;top:349px;font-size:13.500px;line-height:20px;color:#fff;white-space:nowrap;margin-top:1px">默认行高</div>
<svg class="abs" style="left:602px;top:358.5px" width="5" height="3.500" viewBox="0 0 5 3.500"><path d="M0 0h5L2.500 3.500z" fill="#e9ebf0"/></svg>
<svg class="abs" style="left:690px;top:358.5px" width="5" height="3.500" viewBox="0 0 5 3.500"><path d="M0 0h5L2.500 3.500z" fill="#e9ebf0"/></svg>
<svg class="abs" style="left:778px;top:358.5px" width="5" height="3.500" viewBox="0 0 5 3.500"><path d="M0 0h5L2.500 3.500z" fill="#e9ebf0"/></svg>
<svg class="abs" style="left:147.5px;top:393px" width="15" height="14" viewBox="0 0 15 14"><circle cx="1.600" cy="2" r="1.500" fill="#e9ebf0"/><circle cx="1.600" cy="7" r="1.500" fill="#e9ebf0"/><circle cx="1.600" cy="12" r="1.500" fill="#e9ebf0"/><path d="M5.500 2h9.500M5.500 7h9.500M5.500 12h9.500" stroke="#e9ebf0" stroke-width="1.500"/></svg>
<svg class="abs" style="left:185.5px;top:393px" width="15" height="14" viewBox="0 0 15 14"><path d="M5.500 2h9.500M5.500 7h9.500M5.500 12h9.500" stroke="#e9ebf0" stroke-width="1.500"/><path d="M0.800 1L1.800 0.400V3.800M0.500 5.800h1.800v1.100L0.500 8.300h2M0.500 10.300h1.800v1.500H1h1.300v1.600H0.500" stroke="#e9ebf0" stroke-width="0.700" fill="none"/></svg>
<svg class="abs" style="left:223.5px;top:393px" width="15" height="14" viewBox="0 0 15 14"><path d="M13.500 6.500V12a1.200 1.200 0 0 1-1.200 1.200H2A1.200 1.200 0 0 1 0.800 12V2A1.200 1.200 0 0 1 2 0.800h9" stroke="#e9ebf0" stroke-width="1.300" fill="none"/><path d="M3.800 6l3.200 3.300 6.500-7" stroke="#e9ebf0" stroke-width="1.400" fill="none"/></svg>
<svg class="abs" style="left:262px;top:394px" width="13" height="12" viewBox="0 0 13 12"><path d="M0 1h13M0 4.300h9M0 7.600h13M0 10.900h9" stroke="#e9ebf0" stroke-width="1.200"/></svg><svg class="abs" style="left:280px;top:398px" width="6" height="4" viewBox="0 0 6 4"><path d="M0 0h6L3 4z" fill="#e9ebf0"/></svg>
<svg class="abs" style="left:314px;top:393.5px" width="14" height="13" viewBox="0 0 14 13"><path d="M0 0.700h14M5 3.600h9M5 6.500h9M5 9.400h9M0 12.300h14" stroke="#e9ebf0" stroke-width="1.300"/><path d="M0.300 3.800l3.200 2.700-3.200 2.700z" fill="#e9ebf0"/></svg><svg class="abs" style="left:332px;top:398px" width="6" height="4" viewBox="0 0 6 4"><path d="M0 0h6L3 4z" fill="#e9ebf0"/></svg>
<svg class="abs" style="left:376.5px;top:392.5px" width="15" height="15" viewBox="0 0 15 15"><circle cx="7.500" cy="7.500" r="6.600" fill="none" stroke="#e9ebf0" stroke-width="1.300"/><circle cx="5.200" cy="5.800" r="1" fill="#e9ebf0"/><circle cx="9.800" cy="5.800" r="1" fill="#e9ebf0"/><path d="M4 8.500h7a3.500 3.500 0 0 1-7 0z" fill="#e9ebf0"/></svg><svg class="abs" style="left:395px;top:398px" width="6" height="4" viewBox="0 0 6 4"><path d="M0 0h6L3 4z" fill="#e9ebf0"/></svg>
<svg class="abs" style="left:428.5px;top:392.5px" width="15" height="15" viewBox="0 0 15 15"><g fill="none" stroke="#e9ebf0" stroke-width="1.600" stroke-linecap="round"><path d="M6.300 8.700a3 3 0 0 0 4.300 0l2.600-2.600a3 3 0 0 0-4.300-4.300L7.800 2.900"/><path d="M8.700 6.300a3 3 0 0 0-4.300 0L1.800 8.900a3 3 0 0 0 4.300 4.300l1.100-1.100"/></g></svg>
<svg class="abs" style="left:466.5px;top:393.5px" width="15" height="13" viewBox="0 0 15 13"><rect x="0.600" y="0.600" width="13.800" height="11.800" fill="none" stroke="#e9ebf0" stroke-width="1.200"/><path d="M1.500 11l3.500-4.500 2.500 2.500 2.500-3.500 3.500 5.500z" fill="#e9ebf0"/><circle cx="11" cy="3.500" r="1.200" fill="#e9ebf0"/></svg><svg class="abs" style="left:485px;top:398px" width="6" height="4" viewBox="0 0 6 4"><path d="M0 0h6L3 4z" fill="#e9ebf0"/></svg>
<svg class="abs" style="left:518.5px;top:394px" width="15" height="12" viewBox="0 0 15 12"><rect x="0" y="0.500" width="15" height="11" rx="2" fill="#e9ebf0"/><path d="M5.800 3.300l4.200 2.700-4.200 2.700z" fill="#1f2535"/></svg><svg class="abs" style="left:537px;top:398px" width="6" height="4" viewBox="0 0 6 4"><path d="M0 0h6L3 4z" fill="#e9ebf0"/></svg>
<svg class="abs" style="left:570.5px;top:393.5px" width="15" height="13" viewBox="0 0 15 13"><rect x="0.600" y="0.600" width="13.800" height="11.800" fill="none" stroke="#e9ebf0" stroke-width="1.200"/><path d="M0.600 3.800h13.800M0.600 6.700h13.800M0.600 9.600h13.800M5.200 0.600v11.800M9.800 0.600v11.800" stroke="#e9ebf0" stroke-width="1"/></svg><svg class="abs" style="left:589px;top:398px" width="6" height="4" viewBox="0 0 6 4"><path d="M0 0h6L3 4z" fill="#e9ebf0"/></svg>
<svg class="abs" style="left:623px;top:396px" width="14" height="8" viewBox="0 0 14 8"><path d="M3.500 0.800L0.800 4l2.700 3.200M10.500 0.800L13.200 4l-2.700 3.200M8 0.500L6 7.500" stroke="#e9ebf0" stroke-width="1.100" fill="none"/></svg>
<svg class="abs" style="left:660.5px;top:393.5px" width="15" height="13" viewBox="0 0 15 13"><path d="M0 1h15M0 12h15" stroke="#e9ebf0" stroke-width="1.300"/><path d="M0 6.500h3.500M5.700 6.500h3.600M11.500 6.500h3.500" stroke="#e9ebf0" stroke-width="1.300"/></svg>
<svg class="abs" style="left:709.5px;top:393.5px" width="15" height="13" viewBox="0 0 15 13"><path d="M3.200 3.600A6.300 6.300 0 1 1 11.400 12.700" stroke="#e9ebf0" stroke-width="1.700" fill="none"/><path d="M0.200 0.200V5.800H5.600z" fill="#e9ebf0"/></svg>
<svg class="abs" style="left:747.5px;top:393.5px" width="15" height="13" viewBox="0 0 15 13"><g transform="translate(15,0) scale(-1,1)"><path d="M3.200 3.600A6.300 6.300 0 1 1 11.400 12.700" stroke="#e9ebf0" stroke-width="1.700" fill="none"/><path d="M0.200 0.200V5.800H5.600z" fill="#e9ebf0"/></g></svg>
<svg class="abs" style="left:797px;top:393.5px" width="14" height="13" viewBox="0 0 14 13"><path d="M0.800 4V0.800H4.500M9.500 0.800h3.700V4M13.200 9v3.200H9.500M4.500 12.200H0.800V9" stroke="#e9ebf0" stroke-width="1.600" fill="none"/></svg>
<div class="lbl" style="top:688px">文件上传</div>
<div class="abs dots" style="left:140px;top:684px;width:85px;height:30px;border-radius:3px"></div>
<svg class="abs" style="left:151px;top:693px" width="10" height="10" viewBox="0 0 10 10"><path d="M5 8V1.500M2 4.300l3-3 3 3M0.500 9.500h9" stroke="#3875ff" stroke-width="1" fill="none"/></svg>
<div class="abs" style="left:167px;top:689px;font-size:12px;line-height:18px;color:#fff;white-space:nowrap;margin-top:1px">上传文件</div>
<div class="abs" style="left:235px;top:689px;font-size:12px;line-height:18px;color:#e9ebf0;white-space:nowrap;margin-top:1px">支持扩展名：<span style="letter-spacing:0.320px">.rar .zip .doc .docx .pdf .jpg...</span></div>
<div class="abs" style="left:644px;top:757px;width:92px;height:32px;border:1px solid #3875ff;border-radius:2px;color:#3875ff;font-size:14px;line-height:30px;text-align:center">取消</div>
<div class="abs" style="left:748px;top:757px;width:92px;height:32px;border-radius:2px;background:#3875ff;color:#fff;font-size:14px;line-height:32px;text-align:center;font-weight:bold">确认</div></div>

</div>
</body>
</html>
